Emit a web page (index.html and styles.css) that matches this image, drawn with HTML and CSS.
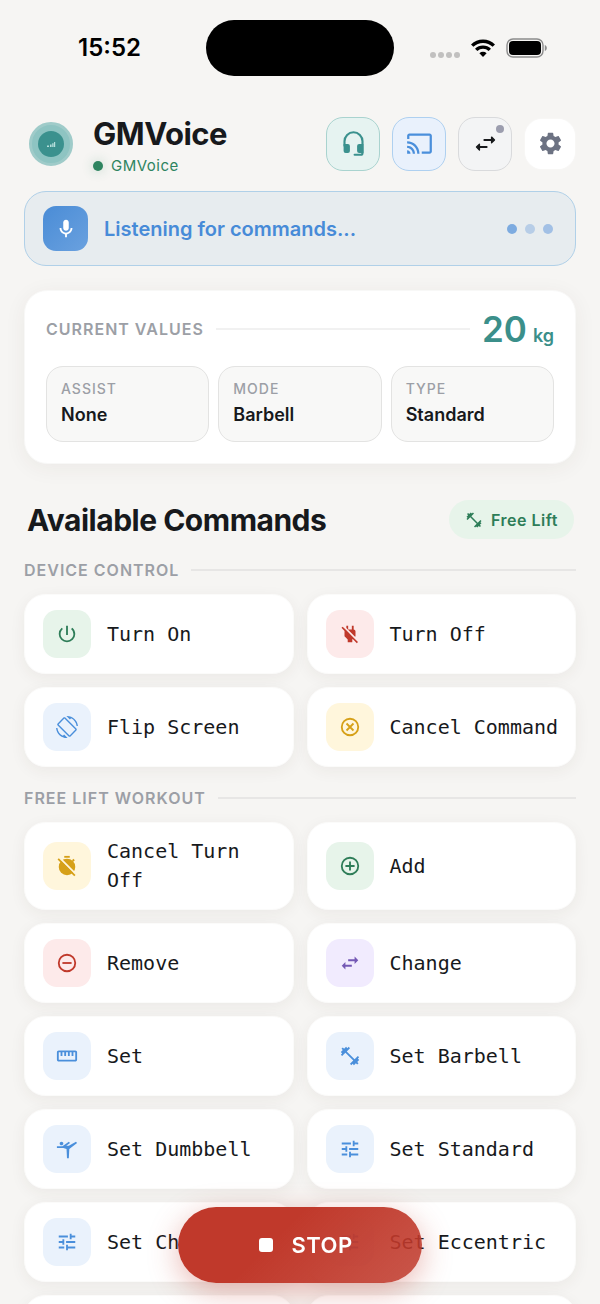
FILE: index.html
```html
<!DOCTYPE html>
<html lang="en">
<head>
  <meta charset="UTF-8" />
  <meta name="viewport" content="width=device-width, initial-scale=1" />
  <title>GMVoice</title>
  <link rel="stylesheet" href="styles.css">
</head>
<body>

  <!-- shared icons -->
  <svg class="sprite" aria-hidden="true">
    <symbol id="i-power" viewBox="0 0 24 24"><path d="M13 3h-2v10h2V3zm4.83 2.17l-1.42 1.42A6.92 6.92 0 0 1 19 12c0 3.87-3.13 7-7 7s-7-3.13-7-7c0-2.19 1.02-4.14 2.59-5.41L6.17 5.17A8.93 8.93 0 0 0 3 12a9 9 0 0 0 18 0c0-2.74-1.23-5.18-3.17-6.83z"/></symbol>
    <symbol id="i-power-off" viewBox="0 0 24 24"><path d="M18 14.49V9c0-1-1.01-2.01-2-2V3h-2v4h-4V3H8v2.48l9.51 9.5.49-.49zm-1.76 1.77L7.2 7.2l-.01.01L3.98 4 2.71 5.25l3.36 3.36C6.04 8.74 6 8.87 6 9v5.48L9.5 18v3h5v-3l.48-.48L19.45 22l1.26-1.28-4.47-4.46z"/></symbol>
    <symbol id="i-rotate" viewBox="0 0 24 24"><path d="M16.48 2.52c3.27 1.55 5.61 4.72 5.97 8.48h1.5C23.44 4.84 18.29 0 12 0l-.66.03 3.81 3.81 1.33-1.32zm-6.25-.77c-.59-.59-1.54-.59-2.12 0L1.75 8.11c-.59.59-.59 1.54 0 2.12l12.02 12.02c.59.59 1.54.59 2.12 0l6.36-6.36c.59-.59.59-1.54 0-2.12L10.23 1.75zm4.6 19.44L2.81 9.17l6.36-6.36 12.02 12.02-6.36 6.36zm-7.31.29C4.25 19.94 1.91 16.76 1.55 13H.05C.56 19.16 5.71 24 12 24l.66-.03-3.81-3.81-1.33 1.32z"/></symbol>
    <symbol id="i-cancel" viewBox="0 0 24 24"><g fill="none" stroke="currentColor" stroke-width="2"><circle cx="12" cy="12" r="9"/><path d="M8.2 8.2l7.6 7.6M15.8 8.2l-7.6 7.6"/></g></symbol>
    <symbol id="i-add" viewBox="0 0 24 24"><g fill="none" stroke="currentColor" stroke-width="2"><circle cx="12" cy="12" r="9"/><path d="M12 7v10M7 12h10"/></g></symbol>
    <symbol id="i-remove" viewBox="0 0 24 24"><g fill="none" stroke="currentColor" stroke-width="2"><circle cx="12" cy="12" r="9"/><path d="M7 12h10"/></g></symbol>
    <symbol id="i-timer-off" viewBox="0 0 24 24"><path d="M9 1h6v2H9z"/><circle cx="12" cy="13" r="9"/><path d="M17.4 5.8l1.6-1.6 1.5 1.5-1.6 1.6z"/><path d="M4 3.2l17.4 17.4" stroke="#fff6dc" stroke-width="2.2"/><path d="M2.4 4.2l18.2 18.2" stroke="currentColor" stroke-width="1.9"/></symbol>
    <symbol id="i-swap" viewBox="0 0 24 24"><path d="M6.99 11L3 15l3.99 4v-3H14v-2H6.99v-3zM21 9l-3.99-4v3H10v2h7.01v3L21 9z"/></symbol>
    <symbol id="i-ruler" viewBox="0 0 24 24"><path d="M21 6H3c-1.1 0-2 .9-2 2v8c0 1.1.9 2 2 2h18c1.1 0 2-.9 2-2V8c0-1.1-.9-2-2-2zm0 10H3V8h2v4h2V8h2v4h2V8h2v4h2V8h2v4h2V8h2v8z"/></symbol>
    <symbol id="i-barbell" viewBox="0 0 24 24"><path d="M20.57 14.86L22 13.43 20.57 12 17 15.57 8.43 7 12 3.43 10.57 2 9.14 3.43 7.71 2 5.57 4.14 4.14 2.71 2.71 4.14l1.43 1.43L2 7.71l1.43 1.43L2 10.57 3.43 12 7 8.43 15.57 17 12 20.57 13.43 22l1.43-1.43L16.29 22l2.14-2.14 1.43 1.43 1.43-1.43-1.43-1.43L22 16.29z"/></symbol>
    <symbol id="i-gymnast" viewBox="0 0 24 24"><path d="M4 6c0-1.1.9-2 2-2s2 .9 2 2-.9 2-2 2-2-.9-2-2zM1 9h6l7-5 1.31 1.52L11.14 8.5H14L21.8 4 23 5.4 14.5 12 14 22h-2l-.5-10L8 11H1V9z"/></symbol>
    <symbol id="i-tune" viewBox="0 0 24 24"><path d="M3 17v2h6v-2H3zM3 5v2h10V5H3zm10 16v-2h8v-2h-8v-2h-2v6h2zM7 9v2H3v2h4v2h2V9H7zm14 4v-2H11v2h10zm-6-4h2V7h4V5h-4V3h-2v6z"/></symbol>
  </svg>

  <div class="app">

    <!-- status bar -->
    <div class="status-bar">
      <div class="time">15:52</div>
      <div class="island"></div>
      <div class="status-icons">
        <span class="signal"><i></i><i></i><i></i><i></i></span>
        <svg class="wifi" viewBox="0 0 24 18" aria-hidden="true">
          <g fill="none" stroke="#000" stroke-width="3.4">
            <path d="M1.2 6.6a15.5 15.5 0 0 1 21.6 0"/>
            <path d="M5.2 10.9a9.8 9.8 0 0 1 13.6 0"/>
          </g>
          <path d="M12 18l-3.6-3.8a5.2 5.2 0 0 1 7.2 0z"/>
        </svg>
        <svg class="battery" viewBox="0 0 41 20" aria-hidden="true">
          <rect x="1" y="1" width="36" height="18" rx="6" fill="none" stroke="#8c8c8c" stroke-width="1.4"/>
          <rect x="3" y="3" width="32" height="14" rx="4"/>
          <path d="M38.8 7v6c1.4-.5 2-1.6 2-3s-.6-2.5-2-3z" fill="#8c8c8c"/>
        </svg>
      </div>
    </div>

    <!-- header -->
    <header class="header">
      <div class="logo">
        <svg viewBox="0 0 26 26" aria-hidden="true"><path d="M9 14.5h2V16H9zM12 13.5h1.6V16H12zM14.2 12.2h1.4V16h-1.4zM16 11h1.2v5H16z" fill="#b5dedb"/></svg>
      </div>
      <div class="brand">
        <h1>GMVoice</h1>
        <p class="connection"><span class="dot"></span>GMVoice</p>
      </div>
      <div class="tools">
        <button class="tool tool-headset" aria-label="Headset">
          <svg viewBox="0 0 24 24" aria-hidden="true">
            <path d="M4 14v-4a8 8 0 0 1 16 0v10.400a1.600 1.600 0 0 1-1.600 1.600H13" fill="none" stroke="currentColor" stroke-width="1.900" stroke-linecap="round"/>
            <path d="M3.200 12.500h3.800a1.800 1.800 0 0 1 1.800 1.800v4.400A1.800 1.800 0 0 1 7 20.500H5a1.800 1.800 0 0 1-1.800-1.800zM20.800 12.500H17a1.800 1.800 0 0 0-1.800 1.800v4.400A1.800 1.800 0 0 0 17 20.500h3.800z"/>
          </svg>
        </button>
        <button class="tool tool-cast" aria-label="Cast">
          <svg viewBox="0 0 24 24" aria-hidden="true"><path d="M21 3H3c-1.100 0-2 .9-2 2v3h2V5h18v14h-7v2h7c1.100 0 2-.9 2-2V5c0-1.100-.9-2-2-2zM1 18v3h3c0-1.660-1.340-3-3-3zm0-4v2c2.760 0 5 2.240 5 5h2c0-3.870-3.130-7-7-7zm0-4v2c4.970 0 9 4.030 9 9h2c0-6.080-4.930-11-11-11z"/></svg>
        </button>
        <button class="tool tool-swap" aria-label="Switch">
          <svg viewBox="0 0 24 24" aria-hidden="true">
            <g stroke="currentColor" stroke-width="1.800" stroke-linecap="round" stroke-linejoin="round">
              <path d="M11 8.800h7M13 15.200H6" fill="none"/>
              <path d="M17.400 6.300l2.600 2.500-2.600 2.500zM6.600 12.700L4 15.200l2.600 2.500z" stroke-width="1.200"/>
            </g>
          </svg>
          <span class="badge"></span>
        </button>
        <button class="tool tool-settings" aria-label="Settings">
          <svg viewBox="0 0 24 24" aria-hidden="true"><path d="M19.140 12.940c.04-.3.060-.61.060-.94 0-.32-.02-.64-.07-.94l2.030-1.580c.18-.14.23-.41.12-.61l-1.920-3.320c-.12-.22-.37-.29-.59-.22l-2.390.96c-.5-.38-1.030-.7-1.620-.94l-.36-2.540c-.04-.24-.24-.41-.48-.41h-3.840c-.24 0-.43.17-.47.41l-.36 2.540c-.59.24-1.130.57-1.620.94l-2.390-.96c-.22-.08-.47 0-.59.22L2.740 8.870c-.12.21-.08.47.12.61l2.030 1.580c-.05.3-.09.63-.09.94s.02.64.07.94l-2.030 1.580c-.18.14-.23.41-.12.61l1.920 3.320c.12.22.37.29.59.22l2.390-.96c.5.38 1.030.7 1.620.94l.36 2.540c.05.24.24.41.48.41h3.840c.24 0 .44-.17.47-.41l.36-2.540c.59-.24 1.130-.56 1.620-.94l2.390.96c.22.08.47 0 .59-.22l1.920-3.320c.12-.22.07-.47-.12-.61l-2.010-1.580zM12 15.600c-1.980 0-3.600-1.620-3.600-3.600s1.620-3.600 3.600-3.600 3.600 1.620 3.600 3.600-1.620 3.600-3.600 3.600z"/></svg>
        </button>
      </div>
    </header>

    <!-- listening banner -->
    <div class="listening" role="status">
      <span class="mic">
        <svg viewBox="0 0 24 24" aria-hidden="true"><path d="M12 14c1.660 0 3-1.340 3-3V5c0-1.660-1.340-3-3-3S9 3.340 9 5v6c0 1.660 1.340 3 3 3z"/><path d="M17 11c0 2.760-2.240 5-5 5s-5-2.240-5-5H5c0 3.530 2.610 6.430 6 6.920V21h2v-3.080c3.390-.49 6-3.390 6-6.920h-2z"/></svg>
      </span>
      <span class="listening-text">Listening for commands...</span>
      <span class="pulse"><i></i><i></i><i></i></span>
    </div>

    <!-- current values -->
    <section class="values">
      <div class="values-head">
        <h2 class="label">Current Values</h2>
        <span class="rule"></span>
        <p class="weight"><span>20</span><small>kg</small></p>
      </div>
      <dl class="value-list">
        <div class="value"><dt>Assist</dt><dd>None</dd></div>
        <div class="value"><dt>Mode</dt><dd>Barbell</dd></div>
        <div class="value"><dt>Type</dt><dd>Standard</dd></div>
      </dl>
    </section>

    <!-- commands -->
    <div class="commands-head">
      <h2>Available Commands</h2>
      <span class="pill"><svg aria-hidden="true"><use href="#i-barbell"/></svg>Free Lift</span>
    </div>

    <div class="group-head"><h3 class="label">Device Control</h3><span class="rule"></span></div>
    <div class="grid">
      <button class="command"><span class="icon green"><svg aria-hidden="true"><use href="#i-power"/></svg></span><span>Turn On</span></button>
      <button class="command"><span class="icon red"><svg aria-hidden="true"><use href="#i-power-off"/></svg></span><span>Turn Off</span></button>
      <button class="command"><span class="icon blue"><svg aria-hidden="true"><use href="#i-rotate"/></svg></span><span>Flip Screen</span></button>
      <button class="command"><span class="icon yellow"><svg aria-hidden="true"><use href="#i-cancel"/></svg></span><span>Cancel Command</span></button>
    </div>

    <div class="group-head"><h3 class="label">Free Lift Workout</h3><span class="rule"></span></div>
    <div class="grid">
      <button class="command"><span class="icon yellow"><svg aria-hidden="true"><use href="#i-timer-off"/></svg></span><span>Cancel Turn Off</span></button>
      <button class="command"><span class="icon green"><svg aria-hidden="true"><use href="#i-add"/></svg></span><span>Add</span></button>
      <button class="command"><span class="icon red"><svg aria-hidden="true"><use href="#i-remove"/></svg></span><span>Remove</span></button>
      <button class="command"><span class="icon purple"><svg aria-hidden="true"><use href="#i-swap"/></svg></span><span>Change</span></button>
      <button class="command"><span class="icon blue"><svg aria-hidden="true"><use href="#i-ruler"/></svg></span><span>Set</span></button>
      <button class="command"><span class="icon blue"><svg aria-hidden="true"><use href="#i-barbell"/></svg></span><span>Set Barbell</span></button>
      <button class="command"><span class="icon blue"><svg aria-hidden="true"><use href="#i-gymnast"/></svg></span><span>Set Dumbbell</span></button>
      <button class="command"><span class="icon blue"><svg aria-hidden="true"><use href="#i-tune"/></svg></span><span>Set Standard</span></button>
      <button class="command"><span class="icon blue"><svg aria-hidden="true"><use href="#i-tune"/></svg></span><span>Set Chains</span></button>
      <button class="command"><span class="icon blue"><svg aria-hidden="true"><use href="#i-tune"/></svg></span><span>Set Eccentric</span></button>
      <div class="command"></div>
      <div class="command"></div>
    </div>
  </div>

  <button class="stop"><span class="stop-square"></span>STOP</button>

</body>
</html>
```
FILE: styles.css
```css
* {
  box-sizing: border-box;
}

body {
  margin: 0;
  background: #f6f5f3;
  color: #17191c;
  font-family: Inter, "Liberation Sans", sans-serif;
}

h1, h2, h3, p, dl, dd {
  margin: 0;
}

button {
  font: inherit;
  color: inherit;
  border: none;
  cursor: pointer;
}

svg {
  display: block;
  fill: currentColor;
}

.sprite {
  position: absolute;
  width: 0;
  height: 0;
}

.app {
  height: 100vh;
  padding: 0 24px;
  overflow-y: auto;
  scrollbar-width: none;
}

/* status bar */
.status-bar {
  display: grid;
  grid-template-columns: 1fr 188px 1fr;
  align-items: center;
  padding-top: 20px;
  color: #000;
}

.time {
  padding-left: 54px;
  font-size: 24px;
  line-height: 28px;
  font-weight: 600;
}

.island {
  height: 56px;
  border-radius: 28px;
  background: #000;
}

.status-icons {
  display: flex;
  align-items: center;
  justify-content: flex-end;
  gap: 11px;
  padding-right: 29px;
}

.signal {
  display: flex;
  gap: 2px;
  padding-top: 13px;
}

.signal i {
  width: 6px;
  height: 6px;
  border-radius: 50%;
  background: #c1c0bf;
}

.wifi {
  width: 24px;
  height: 18px;
}

.battery {
  width: 41px;
  height: 20px;
}

/* header */
.header {
  display: flex;
  align-items: center;
  margin-top: 37px;
}

.logo {
  display: grid;
  place-items: center;
  width: 44px;
  height: 44px;
  margin-left: 5px;
  border-radius: 50%;
  background: #8ec4c2;
  border: 3px solid #9fcbc9;
}

.logo svg {
  width: 26px;
  height: 26px;
  border-radius: 50%;
  background: #3b918e;
}

.brand {
  flex: 1;
  margin-left: 20px;
}

.brand h1 {
  font-size: 31px;
  line-height: 42px;
  font-weight: 700;
  letter-spacing: -0.5px;
}

.connection {
  display: flex;
  align-items: center;
  gap: 8px;
  margin-top: 3px;
  font-size: 15px;
  line-height: 16px;
  letter-spacing: 0.5px;
  color: #2e8460;
}

.dot {
  width: 10px;
  height: 10px;
  border-radius: 50%;
  background: #2e8460;
  box-shadow: 0 0 12px rgba(46, 132, 96, 0.3);
}

.tools {
  display: flex;
  align-items: center;
  gap: 12px;
}

.tool {
  position: relative;
  display: grid;
  place-items: center;
  width: 54px;
  height: 54px;
  padding: 0;
  border: 1px solid;
  border-radius: 17px;
}

.tool svg {
  width: 27px;
  height: 27px;
}

.tool-headset {
  background: #e6f3f1;
  border-color: #a9d3cf;
  color: #3b918e;
}

.tool-cast {
  background: #e9f1fc;
  border-color: #aed0f0;
  color: #4a8fdb;
}

.tool-swap {
  background: #f3f4f5;
  border-color: #d9dadc;
  color: #17191c;
}

.tool-settings {
  width: 50px;
  height: 50px;
  margin: 0 1px;
  border: none;
  background: #fff;
  box-shadow: 0 0 2px rgba(255, 255, 255, 0.8);
  color: #6c7282;
}

.badge {
  position: absolute;
  top: 7px;
  right: 7px;
  width: 8px;
  height: 8px;
  border-radius: 50%;
  background: #9b9dae;
}

/* listening banner */
.listening {
  display: flex;
  align-items: center;
  height: 75px;
  margin-top: 17px;
  padding: 0 22px 0 18px;
  border: 1px solid #b0d0e8;
  border-radius: 22px;
  background: #e7ecef;
}

.mic {
  display: grid;
  place-items: center;
  width: 45px;
  height: 45px;
  border-radius: 13px;
  background: linear-gradient(135deg, #4a8cd6, #6aa1df);
  color: #fff;
}

.mic svg {
  width: 22px;
  height: 22px;
}

.listening-text {
  flex: 1;
  margin-left: 16px;
  font-size: 20px;
  font-weight: 600;
  color: #478bd8;
}

.pulse {
  display: flex;
  gap: 8px;
}

.pulse i {
  width: 10px;
  height: 10px;
  border-radius: 50%;
  background: #7dabe0;
}

.pulse i:nth-child(2) {
  background: #b7cde7;
}

.pulse i:nth-child(3) {
  background: #a2c0e5;
}

/* current values */
.values {
  margin-top: 24px;
  padding: 20px 21px 21px;
  border: 1px solid #f8f8f7;
  border-radius: 23px;
  background: #fff;
  box-shadow: 0 4px 22px rgba(60, 50, 40, 0.06);
}

.values-head,
.group-head {
  display: flex;
  align-items: center;
  gap: 12px;
}

.label {
  font-size: 16px;
  line-height: 20px;
  font-weight: 600;
  letter-spacing: 1px;
  text-transform: uppercase;
  color: #9c9fa6;
}

.rule {
  flex: 1;
  height: 2px;
  background: #e7e6e5;
}

.values .rule {
  background: #f1f1f1;
}

.weight {
  display: flex;
  align-items: baseline;
  gap: 6px;
  font-size: 35px;
  line-height: 36px;
  font-weight: 600;
  color: #3b8f8a;
}

.weight small {
  font-size: 18px;
  line-height: 20px;
}

.value-list {
  display: grid;
  grid-template-columns: repeat(3, 1fr);
  gap: 9px;
  margin-top: 19px;
}

.value {
  padding: 12px 14px 14px;
  border: 1px solid #e3e3e2;
  border-radius: 17px;
  background: #f8f8f7;
}

.value dt {
  font-size: 14px;
  line-height: 20px;
  font-weight: 500;
  letter-spacing: 1px;
  text-transform: uppercase;
  color: #9c9fa6;
}

.value dd {
  margin-top: 4px;
  font-size: 18px;
  line-height: 24px;
  font-weight: 600;
}

/* commands */
.commands-head {
  display: flex;
  align-items: center;
  justify-content: space-between;
  margin-top: 36px;
  padding: 0 2px 0 3px;
}

.commands-head h2 {
  font-size: 30px;
  line-height: 36px;
  font-weight: 700;
  letter-spacing: -0.5px;
}

.pill {
  display: flex;
  align-items: center;
  gap: 8px;
  height: 39px;
  padding: 0 16px;
  border-radius: 20px;
  background: #e7f4ea;
  color: #2e7d58;
  font-size: 16px;
  font-weight: 600;
  letter-spacing: 0.5px;
}

.pill svg {
  width: 18px;
  height: 18px;
}

.group-head {
  margin-top: 21px;
}

.grid {
  display: grid;
  grid-template-columns: 1fr 1fr;
  gap: 13px;
  margin-top: 14px;
}

.command {
  display: flex;
  align-items: center;
  gap: 16px;
  min-height: 80px;
  padding: 14px 14px 14px 18px;
  border: 1px solid #fbfbfa;
  border-radius: 21px;
  background: #fff;
  box-shadow: 0 4px 16px rgba(60, 50, 40, 0.06);
  font-family: "DejaVu Sans Mono", monospace;
  font-size: 20px;
  line-height: 29px;
  text-align: left;
}

.icon {
  display: grid;
  place-items: center;
  flex: none;
  width: 48px;
  height: 48px;
  border-radius: 14px;
}

.icon svg {
  width: 22px;
  height: 22px;
}

.green {
  background: #e7f4ea;
  color: #2e7d58;
}

.red {
  background: #fdeaea;
  color: #c0392b;
}

.blue {
  background: #eaf2fc;
  color: #4a8fdb;
}

.yellow {
  background: #fff6dc;
  color: #d6a018;
}

.purple {
  background: #f1ebfe;
  color: #7458b5;
}

/* floating stop button */
.stop {
  position: fixed;
  left: 50%;
  bottom: 21px;
  transform: translateX(-50%);
  display: flex;
  align-items: center;
  justify-content: center;
  gap: 18px;
  width: 244px;
  height: 76px;
  padding: 0 0 0 12px;
  border-radius: 38px;
  background: linear-gradient(135deg, #c0392b 40%, rgba(192, 57, 43, 0.85));
  box-shadow: 0 8px 30px rgba(192, 57, 43, 0.35);
  color: #fff;
  font-size: 22px;
  font-weight: 600;
  letter-spacing: 0.5px;
}

.stop-square {
  width: 14px;
  height: 14px;
  border-radius: 3px;
  background: #fff;
}
```
